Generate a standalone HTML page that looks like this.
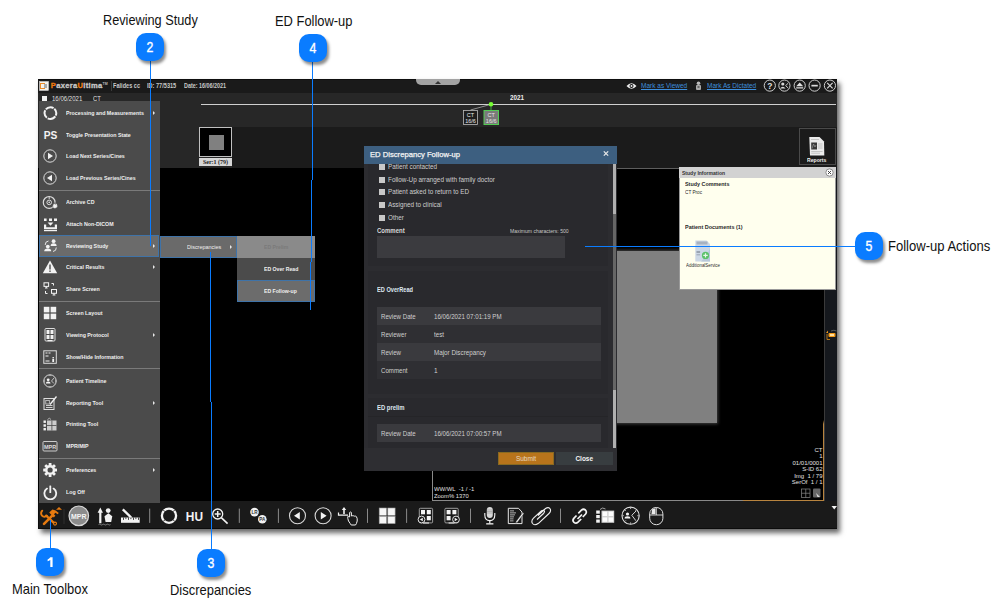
<!DOCTYPE html>
<html><head><meta charset="utf-8">
<style>
*{margin:0;padding:0;box-sizing:border-box}
html,body{width:1006px;height:614px;overflow:hidden;background:#fff;font-family:"Liberation Sans",sans-serif}
.a{position:absolute}
.lbl{position:absolute;font-size:15px;color:#111;white-space:nowrap;line-height:15px;transform:scaleX(.848);transform-origin:0 50%}
.badge{position:absolute;width:28px;height:28px;border-radius:10px;background:#0a7cff;box-shadow:2px 3px 3px rgba(0,0,0,.45);color:#fff;font-size:14.5px;line-height:28px;text-align:center}
.badge span{display:inline-block;transform:scaleX(.85);-webkit-text-stroke:.35px #fff}
.mi{position:absolute;left:66.2px;font-size:5.6px;font-weight:bold;color:#f0f0f0;white-space:nowrap;transform:scaleX(.945);transform-origin:0 50%;line-height:8px}
.arr{position:absolute;left:153px;width:0;height:0;border-left:2.2px solid #e8e8e8;border-top:2px solid transparent;border-bottom:2px solid transparent;margin-top:.5px}
.sep{position:absolute;left:39px;width:121px;height:1px;background:#7a7a7a}
.ico{position:absolute;left:42px}
.dt{position:absolute;font-size:6.5px;line-height:8px;color:#cfcfcf;white-space:nowrap;transform-origin:0 50%}
.t7{position:absolute;font-size:7px;white-space:nowrap;line-height:8px;transform-origin:0 50%}
</style></head><body>

<!-- ===== annotation labels ===== -->
<div class="lbl" style="left:103px;top:12.2px">Reviewing Study</div>
<div class="lbl" style="left:275px;top:13.3px;transform:scaleX(.86)">ED Follow-up</div>
<div class="lbl" style="left:12px;top:581.2px;transform:scaleX(.862)">Main Toolbox</div>
<div class="lbl" style="left:169.8px;top:581.7px;transform:scaleX(.863)">Discrepancies</div>
<div class="lbl" style="left:888px;top:238.3px;transform:scaleX(.869)">Follow-up Actions</div>

<!-- ===== app window ===== -->
<div class="a" id="win" style="left:38px;top:79px;width:799px;height:450px;background:#000;box-shadow:3px 4px 5px rgba(0,0,0,.6)"></div>
<!-- title bar -->
<div class="a" style="left:38px;top:79px;width:799px;height:13.5px;background:#1a1a1a;border-top:1px solid #0e0e0e"></div>
<!-- row2 + timeline -->
<div class="a" style="left:38px;top:92.5px;width:799px;height:34.5px;background:#272727"></div>
<!-- series strip -->
<div class="a" style="left:38px;top:127px;width:194px;height:41px;background:#272727"></div>
<div class="a" style="left:232px;top:127px;width:605px;height:41px;background:#1b1b1b"></div>
<!-- viewport -->
<div class="a" style="left:38px;top:168px;width:786px;height:333px;background:#000"></div>
<div class="a" style="left:824px;top:168px;width:13px;height:333px;background:#15181d;border-left:1px solid #3a3a3a"></div>
<!-- toolbar -->
<div class="a" style="left:38px;top:501px;width:799px;height:28px;background:#1a1a1a;border-left:1px solid #0c0c0c;border-bottom:1px solid #0c0c0c"></div>

<!-- title bar content -->
<svg class="a" style="left:39px;top:81px" width="10" height="10" viewBox="0 0 10 10">
  <rect x="0.5" y="0.5" width="9" height="9" fill="#f4f0ea" stroke="#ddd" stroke-width="0.5"/>
  <rect x="1.5" y="2.5" width="4" height="5" fill="none" stroke="#e88a2a" stroke-width="1"/>
  <rect x="5" y="3" width="3" height="4" fill="#aaa"/>
</svg>
<div class="a" style="left:50.8px;top:82.3px;font-size:7.6px;font-weight:bold;line-height:8px;white-space:nowrap;letter-spacing:.3px;color:#c8c8c8;-webkit-text-stroke:.3px currentColor"><span style="color:#ee7a10">P</span>axera<span style="color:#ee7a10">U</span>ltima<span style="font-size:3.5px;vertical-align:top;line-height:4px;letter-spacing:0;-webkit-text-stroke:0;color:#bbb">TM</span></div>
<div class="a" style="left:110.5px;top:81px;width:1px;height:10px;background:#3a3a3a"></div>
<div class="t7" style="left:113px;top:82px;font-size:6.5px;color:#c8c8c8;font-weight:bold;transform:scaleX(.86)">Falides cc</div>
<div class="t7" style="left:147px;top:82px;font-size:6.5px;color:#c8c8c8;font-weight:bold;transform:scaleX(.86)">ID: 77/5315</div>
<div class="t7" style="left:184px;top:82px;font-size:6.5px;color:#c8c8c8;font-weight:bold;transform:scaleX(.83)">Date: 16/06/2021</div>
<!-- grey top tab -->
<div class="a" style="left:416px;top:79px;width:44px;height:6px;background:#a3a3a3;border-radius:0 0 5px 5px"></div>
<div class="a" style="left:434.5px;top:80.5px;width:0;height:0;border-left:3px solid transparent;border-right:3px solid transparent;border-bottom:3px solid #333"></div>
<!-- right side title -->
<svg class="a" style="left:626px;top:82px" width="11" height="8" viewBox="0 0 11 8">
  <path d="M0.5 4 Q5.5 -1.5 10.5 4 Q5.5 9.5 0.5 4Z" fill="#f0f0f0"/>
  <circle cx="5.5" cy="4" r="2" fill="#121212"/><circle cx="5.5" cy="4" r="1" fill="#f0f0f0"/>
</svg>
<div class="t7" style="left:641px;top:82px;color:#3e8fdc;text-decoration:underline;transform:scaleX(.93);transform-origin:0 50%">Mark as Viewed</div>
<svg class="a" style="left:695px;top:81px" width="7" height="10" viewBox="0 0 7 10">
  <circle cx="3.5" cy="2.2" r="1.8" fill="#bbb"/><rect x="1" y="4" width="5" height="5" rx="1" fill="#aaa"/><rect x="2.5" y="5" width="2" height="2" fill="#666"/>
</svg>
<div class="t7" style="left:707px;top:82px;color:#3e8fdc;text-decoration:underline;transform:scaleX(.93);transform-origin:0 50%">Mark As Dictated</div>
<svg class="a" style="left:762px;top:79px" width="76" height="13" viewBox="0 0 76 13">
  <g fill="none" stroke="#d0d0d0" stroke-width="1">
    <circle cx="7.8" cy="6.6" r="5.6"/>
    <circle cx="22.4" cy="6.6" r="5.6"/>
    <circle cx="37.7" cy="6.6" r="5.6"/>
    <circle cx="52.6" cy="6.6" r="5.6"/>
    <circle cx="67.9" cy="6.6" r="5.6"/>
  </g>
  <text x="7.8" y="9.6" font-size="8.5" font-weight="bold" fill="#e0e0e0" text-anchor="middle" font-family="Liberation Sans">?</text>
  <g fill="#d8d8d8"><circle cx="20.8" cy="5" r="1.6"/><path d="M18 9.6 Q20.8 5.8 23.6 9.6Z"/></g><path d="M26.2 4.2 L23.6 6.6 L26.2 9" fill="none" stroke="#d8d8d8" stroke-width="0.9"/>
  <path d="M34.2 7.2 L37.7 3.6 L41.2 7.2Z M34.2 8.2 H41.2 V9.4 H34.2Z" fill="#e0e0e0"/>
  <rect x="49.4" y="5.8" width="6.4" height="1.7" fill="#d8d8d8"/>
  <path d="M65.2 3.9 L70.6 9.3 M70.6 3.9 L65.2 9.3" stroke="#d8d8d8" stroke-width="1.2"/>
</svg>
<!-- row 2 -->
<div class="a" style="left:42px;top:96.3px;width:4.7px;height:4.7px;background:#f0f0f0"></div>
<div class="t7" style="left:52px;top:94.8px;font-size:6.5px;color:#e0e0e0;transform:scaleX(.93)">16/06/2021</div>
<div class="t7" style="left:93px;top:94.8px;font-size:6.5px;color:#e0e0e0;transform:scaleX(.9)">CT</div>
<!-- timeline -->
<div class="a" style="left:201px;top:103.5px;width:635px;height:1.5px;background:#cfcfcf"></div>
<div class="t7" style="left:510px;top:94px;color:#eee;font-weight:bold;transform:scaleX(.9);transform-origin:0 50%">2021</div>
<svg class="a" style="left:460px;top:100px" width="45" height="28" viewBox="0 0 45 28">
  <line x1="31" y1="4.3" x2="10.5" y2="10" stroke="#bbb" stroke-width="0.7"/>
  <line x1="31" y1="4.3" x2="31" y2="10" stroke="#4c4" stroke-width="0.8"/>
  <rect x="3.5" y="10.5" width="14" height="14" fill="#1e1e1e" stroke="#bbb" stroke-width="0.8"/>
  <rect x="24" y="10.5" width="14.5" height="14" fill="#7a7a7a" stroke="#5c5" stroke-width="1"/>
  <circle cx="31" cy="4.3" r="2.3" fill="#7f3"/>
  <g font-family="Liberation Sans" font-size="5.5" fill="#e8e8e8" text-anchor="middle">
    <text x="10.5" y="16.5">CT</text><text x="10.5" y="22.5">16/6</text>
    <text x="31.2" y="16.5">CT</text><text x="31.2" y="22.5">16/6</text>
  </g>
</svg>
<!-- series thumbnail -->
<div class="a" style="left:199px;top:127px;width:33px;height:30px;background:#000;border:1px solid #c0c0c0"></div>
<div class="a" style="left:208.5px;top:135px;width:15.5px;height:15px;background:#808080"></div>
<div class="a" style="left:199px;top:157.5px;width:33px;height:8px;background:#d6d6d6;font-family:'Liberation Serif',serif;font-size:6px;line-height:8px;color:#222;text-align:center;font-weight:bold">Ser:1 (79)</div>
<!-- reports -->
<div class="a" style="left:799px;top:128px;width:37px;height:37px;border:1px solid #4a4a4a;background:#1b1b1b"></div>
<svg class="a" style="left:808px;top:136px" width="18" height="21" viewBox="0 0 18 21">
  <path d="M1.3 1 H11.5 L16 5.5 L16.3 19.5 H2 Z" fill="#ececec"/>
  <rect x="3.2" y="6.5" width="5.8" height="7" fill="#3a3a3a"/>
  <path d="M4 12.5 L5.5 8 L7 11 L8 9" fill="none" stroke="#aaa" stroke-width="0.6"/>
  <g stroke="#aaa" stroke-width="0.6"><line x1="3" y1="3.5" x2="11" y2="3.5"/><line x1="10" y1="8" x2="14.5" y2="8"/><line x1="10" y1="10" x2="14.5" y2="10"/><line x1="10" y1="12" x2="14.5" y2="12"/><line x1="3.2" y1="15.5" x2="14.5" y2="15.5"/><line x1="3.2" y1="17.2" x2="12" y2="17.2"/></g>
</svg>
<div class="a" style="left:807.2px;top:157px;font-size:6px;font-weight:bold;color:#f0f0f0;line-height:7px;transform:scaleX(.85);transform-origin:0 50%">Reports</div>

<!--MENU-->
<div class="a" style="left:39px;top:101px;width:121px;height:402px;background:#4b4b4b"></div>
<div class="sep" style="top:189.5px"></div>
<div class="sep" style="top:300.5px"></div>
<div class="sep" style="top:368.0px"></div>
<div class="sep" style="top:458.0px"></div>
<div class="a" style="left:39px;top:235px;width:120px;height:22px;background:#6b6b6b;border:1px solid #3f73a8"></div>
<div class="mi" style="top:109px">Processing and Measurements</div>
<div class="arr" style="top:110.5px"></div>
<svg class="ico" style="top:105px" width="16" height="16" viewBox="0 0 16 16"><circle cx="8.4" cy="8.1" r="5.9" fill="none" stroke="#f2f2f2" stroke-width="2" stroke-dasharray="8.37 0.9" stroke-dashoffset="-3.5"/></svg>
<div class="mi" style="top:131px">Toggle Presentation State</div>
<svg class="ico" style="top:127px" width="16" height="16" viewBox="0 0 16 16"><text x="1.8" y="12.4" font-family="Liberation Sans" font-weight="bold" font-size="10.4" fill="#f2f2f2" textLength="13.6" lengthAdjust="spacingAndGlyphs">PS</text></svg>
<div class="mi" style="top:152px">Load Next Series/Cines</div>
<svg class="ico" style="top:148px" width="16" height="16" viewBox="0 0 16 16"><circle cx="8" cy="8" r="6.2" fill="none" stroke="#ddd" stroke-width="1"/><path d="M6 4.8 L11 8 L6 11.2Z" fill="#f2f2f2"/></svg>
<div class="mi" style="top:174px">Load Previous Series/Cines</div>
<svg class="ico" style="top:170px" width="16" height="16" viewBox="0 0 16 16"><circle cx="8" cy="8" r="6.2" fill="none" stroke="#ddd" stroke-width="1"/><path d="M10 4.8 L5 8 L10 11.2Z" fill="#f2f2f2"/></svg>
<div class="mi" style="top:198px">Archive CD</div>
<svg class="ico" style="top:194px" width="16" height="16" viewBox="0 0 16 16"><circle cx="7.2" cy="8.4" r="5.9" fill="none" stroke="#ddd" stroke-width="1.2"/><circle cx="7.2" cy="8.4" r="2.3" fill="none" stroke="#ddd" stroke-width="1"/><circle cx="7.2" cy="8.4" r="0.8" fill="#ddd"/><line x1="7.2" y1="2.5" x2="7.2" y2="5" stroke="#ddd" stroke-width="1"/><path d="M10.8 13.6 Q10 10.8 12.4 9 Q12.6 10.6 13.6 10.2 Q13.4 9.2 13.2 8.4 Q16.2 10.4 15.4 13 Q14.6 14.4 12.8 14.4 Q11.4 14.4 10.8 13.6Z" fill="#f2f2f2" stroke="#4b4b4b" stroke-width="0.5"/></svg>
<div class="mi" style="top:220px">Attach Non-DICOM</div>
<svg class="ico" style="top:216px" width="16" height="16" viewBox="0 0 16 16"><g fill="#f2f2f2"><rect x="2" y="2.5" width="2.6" height="2.5"/><rect x="7" y="2.5" width="3" height="2.5"/><rect x="12" y="2.5" width="3" height="2.5"/><path d="M2 8.6 H4.2 V11.2 H12.8 V8.6 H15 V13.2 H2Z"/><rect x="2" y="14" width="13" height="1.2"/><path d="M5.6 6.4 H11.4 L8.5 9.8Z"/></g></svg>
<div class="mi" style="top:242px">Reviewing Study</div>
<div class="arr" style="top:243.5px"></div>
<svg class="ico" style="top:238px" width="16" height="16" viewBox="0 0 16 16"><g fill="#f2f2f2"><circle cx="11.6" cy="3.2" r="1.9"/><path d="M8.6 8 Q8.6 5.2 11.6 5.2 Q14.6 5.2 14.6 8Z"/><circle cx="5.8" cy="8.6" r="1.9"/><path d="M2.2 13.2 Q2.2 10.6 5.8 10.6 Q9.2 10.6 9.2 13.2Z"/></g><g fill="none" stroke="#f2f2f2" stroke-width="0.9"><path d="M3.2 7 Q3 3.5 6.5 3"/><path d="M14.3 9.5 Q14.5 13 11 13.5"/></g></svg>
<div class="mi" style="top:263px">Critical Results</div>
<div class="arr" style="top:264.5px"></div>
<svg class="ico" style="top:259px" width="16" height="16" viewBox="0 0 16 16"><path d="M8 1.5 L15.2 14.2 H0.8Z" fill="#f2f2f2"/><rect x="7.3" y="5.5" width="1.4" height="5" fill="#4b4b4b"/><rect x="7.3" y="11.5" width="1.4" height="1.4" fill="#4b4b4b"/></svg>
<div class="mi" style="top:285px">Share Screen</div>
<svg class="ico" style="top:281px" width="16" height="16" viewBox="0 0 16 16"><g fill="none" stroke="#f2f2f2" stroke-width="1"><rect x="2" y="1.8" width="4.6" height="3.6"/><line x1="4.3" y1="5.4" x2="4.3" y2="7"/><line x1="3" y1="7" x2="5.6" y2="7"/><rect x="9.5" y="8.5" width="5" height="3.8"/><line x1="12" y1="12.3" x2="12" y2="14"/><line x1="10.6" y1="14" x2="13.4" y2="14"/><path d="M9.5 2.5 H11.5 V4.5"/><path d="M3.5 10 V12.5 H5.5"/></g></svg>
<div class="mi" style="top:309px">Screen Layout</div>
<svg class="ico" style="top:305px" width="16" height="16" viewBox="0 0 16 16"><g fill="#f2f2f2"><rect x="1.8" y="1.8" width="5.6" height="5.6"/><rect x="8.6" y="1.8" width="5.6" height="5.6"/><rect x="1.8" y="8.6" width="5.6" height="5.6"/><rect x="8.6" y="8.6" width="5.6" height="5.6"/></g></svg>
<div class="mi" style="top:331px">Viewing Protocol</div>
<div class="arr" style="top:332.5px"></div>
<svg class="ico" style="top:327px" width="16" height="16" viewBox="0 0 16 16"><rect x="3" y="1.5" width="10" height="12.5" rx="1" fill="none" stroke="#ddd" stroke-width="1"/><g fill="#f2f2f2"><rect x="4.5" y="3" width="3" height="4"/><rect x="8.5" y="3" width="3" height="4"/><rect x="4.5" y="8" width="3" height="4"/><rect x="8.5" y="8" width="3" height="4"/><rect x="5.5" y="13" width="5" height="1.2"/></g></svg>
<div class="mi" style="top:352.5px">Show/Hide Information</div>
<svg class="ico" style="top:348.5px" width="16" height="16" viewBox="0 0 16 16"><rect x="1.8" y="1.8" width="12.5" height="12.5" fill="none" stroke="#ddd" stroke-width="1"/><g fill="#f2f2f2"><rect x="3.5" y="3.5" width="2" height="1"/><rect x="6.5" y="3.5" width="2" height="1"/><rect x="3.5" y="6.5" width="3" height="1"/><rect x="3.5" y="11.5" width="4" height="1"/><rect x="10.5" y="8" width="1.4" height="1.4"/><rect x="10.3" y="10" width="1.8" height="3"/></g></svg>
<div class="mi" style="top:376.5px">Patient Timeline</div>
<svg class="ico" style="top:372.5px" width="16" height="16" viewBox="0 0 16 16"><circle cx="8" cy="8" r="6.2" fill="none" stroke="#ddd" stroke-width="1"/><g stroke="#ddd" stroke-width="0.8"><line x1="8" y1="1.8" x2="8" y2="3"/><line x1="14.2" y1="8" x2="13" y2="8"/><line x1="8" y1="14.2" x2="8" y2="13"/><line x1="1.8" y1="8" x2="3" y2="8"/><path d="M12 5 L9.5 8 L12 10.5" fill="none"/></g><g fill="#f2f2f2"><circle cx="6.2" cy="6.8" r="1.4"/><path d="M3.8 10.5 Q3.8 8.5 6.2 8.5 Q8.6 8.5 8.6 10.5Z"/></g></svg>
<div class="mi" style="top:398.5px">Reporting Tool</div>
<div class="arr" style="top:400.0px"></div>
<svg class="ico" style="top:394.5px" width="16" height="16" viewBox="0 0 16 16"><rect x="2" y="3.5" width="10" height="11" fill="none" stroke="#ddd" stroke-width="1"/><g fill="#ddd"><rect x="3.8" y="5.5" width="3.5" height="3.5" fill="none" stroke="#ddd" stroke-width="0.7"/><rect x="4" y="10" width="6.5" height="0.9"/><rect x="4" y="12" width="6.5" height="0.9"/></g><path d="M8 9.5 L14.5 1.5" stroke="#f2f2f2" stroke-width="1.3"/></svg>
<div class="mi" style="top:420px">Printing Tool</div>
<svg class="ico" style="top:416px" width="16" height="16" viewBox="0 0 16 16"><g fill="#f2f2f2"><rect x="1.5" y="4.5" width="2.4" height="2.4"/><rect x="1.5" y="8.3" width="2.4" height="2.4"/><rect x="1.5" y="12" width="2.4" height="2.4"/></g><rect x="5" y="4.5" width="9.5" height="10" fill="#ccc"/><g fill="#4b4b4b"><rect x="9.5" y="4.5" width="0.8" height="10"/><rect x="5" y="9.2" width="9.5" height="0.8"/></g><path d="M5.5 3.5 Q7.5 1 9 3.5" fill="none" stroke="#ccc" stroke-width="0.8"/></svg>
<div class="mi" style="top:442px">MPR/MIP</div>
<svg class="ico" style="top:438px" width="16" height="16" viewBox="0 0 16 16"><rect x="1" y="3.5" width="14" height="9.5" rx="1" fill="none" stroke="#ccc" stroke-width="1"/><text x="8" y="10.6" font-family="Liberation Sans" font-weight="bold" font-size="5.5" fill="#ddd" text-anchor="middle">MPR</text></svg>
<div class="mi" style="top:466px">Preferences</div>
<div class="arr" style="top:467.5px"></div>
<svg class="ico" style="top:462px" width="16" height="16" viewBox="0 0 16 16"><g transform="translate(8.1 8)" fill="#f2f2f2"><circle r="5.1"/><rect x="-1.4" y="-6.9" width="2.8" height="2.6" rx="0.5" transform="rotate(0)"/><rect x="-1.4" y="-6.9" width="2.8" height="2.6" rx="0.5" transform="rotate(45)"/><rect x="-1.4" y="-6.9" width="2.8" height="2.6" rx="0.5" transform="rotate(90)"/><rect x="-1.4" y="-6.9" width="2.8" height="2.6" rx="0.5" transform="rotate(135)"/><rect x="-1.4" y="-6.9" width="2.8" height="2.6" rx="0.5" transform="rotate(180)"/><rect x="-1.4" y="-6.9" width="2.8" height="2.6" rx="0.5" transform="rotate(225)"/><rect x="-1.4" y="-6.9" width="2.8" height="2.6" rx="0.5" transform="rotate(270)"/><rect x="-1.4" y="-6.9" width="2.8" height="2.6" rx="0.5" transform="rotate(315)"/><circle r="2.6" fill="#4b4b4b"/></g></svg>
<div class="mi" style="top:487.5px">Log Off</div>
<svg class="ico" style="top:483.5px" width="16" height="16" viewBox="0 0 16 16"><path d="M5 4.6 A5.9 5.9 0 1 0 11.6 4.6" fill="none" stroke="#f2f2f2" stroke-width="1.8" stroke-linecap="round"/><rect x="7.4" y="1.6" width="1.8" height="7.4" rx="0.5" fill="#f2f2f2"/></svg>
<div class="a" style="left:160px;top:235.5px;width:77px;height:22.5px;background:#6a6a6a;border:1px solid #3f73a8"></div>
<div class="mi" style="left:187px;top:242.5px;font-size:6px;font-weight:normal;transform:scaleX(.91)">Discrepancies</div>
<div class="arr" style="left:229.5px;top:244px"></div>
<div class="a" style="left:237px;top:236px;width:78px;height:22px;background:#8a8a8a"></div>
<div class="a" style="left:237px;top:258px;width:78px;height:22px;background:#4b4b4b"></div>
<div class="a" style="left:237px;top:280px;width:78px;height:22px;background:#6c6c6c;border:1px solid #3f73a8"></div>
<div class="mi" style="left:264px;top:243px;color:#7a7a7a;transform:scaleX(.92)">ED Prelim</div>
<div class="mi" style="left:264px;top:265px;transform:scaleX(.92)">ED Over Read</div>
<div class="mi" style="left:264px;top:287px;transform:scaleX(.92)">ED Follow-up</div>
<!--/MENU-->
<!--VIEW-->
<!-- ===== viewport overlays ===== -->
<div class="a" style="left:596px;top:251px;width:121px;height:171.5px;background:#808080;box-shadow:0 0 3px 1px rgba(128,128,128,.5)"></div>
<!-- viewport borders -->
<div class="a" style="left:432px;top:168px;width:1px;height:333px;background:#8a8a8a"></div>
<div class="a" style="left:432px;top:168px;width:392px;height:1px;background:#5e5e5e"></div>
<div class="a" style="left:432px;top:500px;width:392px;height:1px;background:linear-gradient(90deg,#8a8a8a 0,#8a8a8a 310px,#b8843f 312px)"></div>
<div class="a" style="left:823px;top:420px;width:1px;height:81px;background:linear-gradient(180deg,rgba(201,138,58,0),#b8843f 4px)"></div>
<div class="t7" style="left:434px;top:486.3px;font-size:6px;line-height:7px;color:#e0e0e0;transform:scaleX(.98)">WW/WL&nbsp;&nbsp;-1 / -1</div>
<div class="t7" style="left:434px;top:493.3px;font-size:6px;line-height:7px;color:#e0e0e0;transform:scaleX(.97)">Zoom% 1370</div>
<div class="a" style="left:760.5px;top:446.5px;width:62px;font-size:6px;line-height:6.6px;color:#e0e0e0;text-align:right;white-space:nowrap">CT<br>1<br>01/01/0001<br>S-ID 62<br>Img&nbsp;&nbsp;1 / 79<br>SerOf&nbsp;&nbsp;1 / 1</div>
<svg class="a" style="left:800px;top:488px" width="23" height="11" viewBox="0 0 23 11">
  <rect x="1.5" y="1" width="8.5" height="8.5" fill="none" stroke="#888" stroke-width="0.7"/>
  <line x1="5.75" y1="1" x2="5.75" y2="9.5" stroke="#888" stroke-width="0.7"/><line x1="1.5" y1="5.25" x2="10" y2="5.25" stroke="#888" stroke-width="0.7"/>
  <rect x="13" y="0.5" width="7.5" height="9" rx="1" fill="#666"/>
  <path d="M16 5 L20 9 L17.5 9Z" fill="#ddd"/>
</svg>
<!-- right strip orange icon -->
<svg class="a" style="left:825px;top:328px" width="12" height="13" viewBox="0 0 12 13">
  <path d="M1 5 L3 2.5 L3 5Z" fill="#f29a1a"/>
  <path d="M2 6 V11.5 H5" fill="none" stroke="#d88a1a" stroke-width="0.8"/>
  <rect x="3.5" y="5" width="7" height="4" rx="1" fill="#f29a1a"/>
  <rect x="5" y="6" width="4" height="2" fill="#ffe0a0"/>
  <path d="M6 3 Q9 1.5 11.5 3" fill="none" stroke="#777" stroke-width="0.7"/>
</svg>
<!-- ===== study info panel ===== -->
<div class="a" style="left:679px;top:167px;width:156.5px;height:123px;background:#ffffee;border:0.5px solid #999"></div>
<div class="a" style="left:679px;top:167px;width:156.5px;height:10.5px;background:#d2d2d2"></div>
<div class="t7" style="left:682px;top:169.6px;font-size:5.6px;line-height:7px;font-weight:bold;color:#333;transform:scaleX(.9)">Study Information</div>
<svg class="a" style="left:825px;top:168px" width="9" height="9" viewBox="0 0 9 9"><circle cx="4.5" cy="4.5" r="3.6" fill="#fff" stroke="#666" stroke-width="0.7"/><path d="M3 3 L6 6 M6 3 L3 6" stroke="#333" stroke-width="0.9"/></svg>
<div class="t7" style="left:685px;top:180.5px;font-size:6px;line-height:7px;font-weight:bold;color:#2a2a2a;transform:scaleX(.9)">Study Comments</div>
<div class="t7" style="left:685px;top:188.5px;font-size:5.5px;line-height:7px;color:#2a2a2a;transform:scaleX(.85)">CT Proc</div>
<div class="t7" style="left:685px;top:224px;font-size:6px;line-height:7px;font-weight:bold;color:#2a2a2a;transform:scaleX(.91)">Patient Documents (1)</div>
<svg class="a" style="left:694px;top:239.5px" width="18" height="22" viewBox="0 0 18 22">
  <path d="M1.3 0.5 H12.5 L16 4 V21.5 H1.3Z" fill="#ccd8e6"/>
  <rect x="2.5" y="1.5" width="11" height="3" fill="#a8b2c0"/>
  <path d="M7 21.5 Q13 17 16 8 V21.5Z" fill="#b8c8da"/>
  <g fill="#9aa4b2"><rect x="2.5" y="11" width="3.6" height="2"/><rect x="2.5" y="14.3" width="3.6" height="1"/></g>
  <circle cx="11.5" cy="15.4" r="3.6" fill="#5cc26a"/>
  <path d="M11.5 13.2 V17.6 M9.3 15.4 H13.7" stroke="#e8f8e8" stroke-width="1.2"/>
</svg>
<div class="t7" style="left:685.5px;top:261.5px;font-size:5.5px;line-height:7px;color:#2a2a2a;transform:scaleX(.8)">AdditionalService</div>

<!--/VIEW-->
<!--DIALOG-->
<!-- ===== dialog ===== -->
<div class="a" style="left:364px;top:146px;width:252.5px;height:325px;background:#2c2c30"></div>
<div class="a" style="left:364px;top:146px;width:252.5px;height:18px;background:#3d5f80"></div>
<div class="a" style="left:370px;top:149.5px;font-size:8px;line-height:9px;color:#f4f4f4;white-space:nowrap;transform:scaleX(.955);transform-origin:0 50%;-webkit-text-stroke:.25px #f4f4f4">ED Discrepancy Follow-up</div>
<svg class="a" style="left:602.5px;top:150.8px" width="6" height="5" viewBox="0 0 6 5"><path d="M0.8 0.4 L5.2 4.6 M5.2 0.4 L0.8 4.6" stroke="#e8e8e8" stroke-width="1.2"/></svg>
<!-- panel 1 -->
<div class="a" style="left:367.5px;top:164px;width:240px;height:101.5px;background:#29292d"></div>
<!-- checkboxes -->
<div class="a" style="left:379px;top:163.5px;width:6px;height:6px;background:#c8c8c8"></div>
<div class="a" style="left:379px;top:176.5px;width:6px;height:6px;background:#c8c8c8"></div>
<div class="a" style="left:379px;top:189px;width:6px;height:6px;background:#c8c8c8"></div>
<div class="a" style="left:379px;top:201.5px;width:6px;height:6px;background:#c8c8c8"></div>
<div class="a" style="left:379px;top:214.5px;width:6px;height:6px;background:#c8c8c8"></div>
<div class="dt" style="left:387.5px;top:162.5px;transform:scaleX(.976)">Patient contacted</div>
<div class="dt" style="left:387.5px;top:175.5px;transform:scaleX(.98)">Follow-Up arranged with family doctor</div>
<div class="dt" style="left:387.5px;top:188px;transform:scaleX(.97)">Patient asked to return to ED</div>
<div class="dt" style="left:387.5px;top:200.5px;transform:scaleX(.97)">Assigned to clinical</div>
<div class="dt" style="left:387.5px;top:213.5px;transform:scaleX(.97)">Other</div>
<div class="dt" style="left:377px;top:226.5px;font-weight:bold;color:#d8d8d8;transform:scaleX(.924)">Comment</div>
<div class="dt" style="left:510px;top:227px;font-size:5px;color:#c8c8c8;transform:scaleX(1.02)">Maximum characters: 500</div>
<div class="a" style="left:377px;top:236px;width:187.5px;height:22px;background:#3b3b3f"></div>
<!-- panel 2 ED OverRead -->
<div class="a" style="left:367.5px;top:271px;width:240px;height:122.5px;background:#29292d"></div>
<div class="dt" style="left:377px;top:286px;font-weight:bold;color:#dde6f0;transform:scaleX(.867)">ED OverRead</div>
<div class="a" style="left:376.5px;top:307px;width:224.5px;height:18px;background:#3a3a3e"></div>
<div class="a" style="left:376.5px;top:325px;width:224.5px;height:18px;background:#2f2f33"></div>
<div class="a" style="left:376.5px;top:343px;width:224.5px;height:18px;background:#3a3a3e"></div>
<div class="a" style="left:376.5px;top:361px;width:224.5px;height:18px;background:#2f2f33"></div>
<div class="dt" style="left:381px;top:313px;transform:scaleX(.94)">Review Date</div>
<div class="dt" style="left:434px;top:313px;transform:scaleX(.95)">16/06/2021 07:01:19 PM</div>
<div class="dt" style="left:381px;top:331px;transform:scaleX(.94)">Reviewer</div>
<div class="dt" style="left:434px;top:331px;transform:scaleX(.95)">test</div>
<div class="dt" style="left:381px;top:349px;transform:scaleX(.94)">Review</div>
<div class="dt" style="left:434px;top:349px;transform:scaleX(.966)">Major Discrepancy</div>
<div class="dt" style="left:381px;top:367px;transform:scaleX(.94)">Comment</div>
<div class="dt" style="left:434px;top:367px">1</div>
<!-- panel 3 ED prelim -->
<div class="a" style="left:367.5px;top:398px;width:240px;height:50px;background:#29292d"></div>
<div class="a" style="left:367.5px;top:416px;width:240px;height:1px;background:#252528"></div>
<div class="dt" style="left:377px;top:403.5px;font-weight:bold;color:#dde6f0;transform:scaleX(.906)">ED prelim</div>
<div class="a" style="left:376.5px;top:424px;width:224.5px;height:18px;background:#3a3a3e"></div>
<div class="dt" style="left:381px;top:430px;transform:scaleX(.94)">Review Date</div>
<div class="dt" style="left:434px;top:430px;transform:scaleX(.95)">16/06/2021 07:00:57 PM</div>
<!-- footer -->
<div class="a" style="left:364px;top:448px;width:252.5px;height:23px;background:#2e2e32"></div>
<div class="a" style="left:498px;top:451.5px;width:56px;height:13.5px;background:#b8741b;border:0.5px solid #8a6a20"></div>
<div class="a" style="left:498px;top:454.5px;width:56px;text-align:center;font-size:6.5px;line-height:8px;color:#e8d8c0">Submit</div>
<div class="a" style="left:556px;top:451.5px;width:56.5px;height:13.5px;background:#383d40"></div>
<div class="a" style="left:556px;top:454.5px;width:56.5px;text-align:center;font-size:6.5px;line-height:8px;font-weight:bold;color:#f4f4f4">Close</div>
<!-- scrollbar -->
<div class="a" style="left:613px;top:164px;width:3px;height:284px;background:#666"></div>
<div class="a" style="left:613px;top:164px;width:3px;height:50px;background:#b0b0b0"></div>
<div class="a" style="left:613px;top:390px;width:3px;height:58px;background:#b0b0b0"></div>

<!--/DIALOG-->
<!--TOOLBAR-->
<!-- ===== toolbar icons ===== -->
<svg class="a" style="left:38px;top:501px" width="799" height="27" viewBox="38 501 799 27">
  <!-- tools -->
  <g fill="none" stroke="#e67a10" stroke-linecap="round">
    <line x1="44" y1="523.8" x2="52.5" y2="515.3" stroke-width="2.6"/>
    <line x1="46.2" y1="515.6" x2="53.6" y2="522.6" stroke-width="2.2"/>
    <path d="M42.2 510.8 A3 3 0 0 0 46.8 515.8" stroke-width="2"/>
    <circle cx="55" cy="523.6" r="1.5" stroke-width="1.1"/>
  </g>
  <path d="M49.2 512.6 L52.4 509.4 Q55.5 509.3 58.8 513 L57.6 514.2 L55.4 512.8 L54 514.2 L55.4 515.8 L53.8 517.4 Z" fill="#e67a10"/>
  <path d="M56 509.8 L59 507 L62 509.8Z" fill="#e67a10"/>
  <rect x="63.5" y="509" width="1" height="15" fill="#2e2e2e"/>
  <!-- MPR -->
  <circle cx="78.8" cy="515.8" r="9.8" fill="#8c8c8c" stroke="#d8d8d8" stroke-width="1.2"/>
  <text x="78.8" y="518.6" font-family="Liberation Sans" font-weight="bold" font-size="7.6" fill="#f4f4f4" text-anchor="middle" textLength="15.5" lengthAdjust="spacingAndGlyphs">MPR</text>
  <!-- person arrow -->
  <g fill="#f2f2f2">
    <path d="M97.6 512.8 L100.3 507.6 L103 512.8 L101.4 512.8 L101.4 523.2 L99.2 523.2 L99.2 512.8Z"/>
    <circle cx="108.2" cy="510.6" r="2.4"/>
    <path d="M104.5 516.3 L108.4 513.3 L112.3 516.3 L111.2 522 L105.6 522Z"/>
  </g>
  <path d="M98.5 524.6 q1 -0.8 2 0 t2 0 t2 0 t2 0 t2 0 t2 0" fill="none" stroke="#bbb" stroke-width="0.6"/>
  <!-- ruler -->
  <path d="M122 510.2 L123.6 508.6 L131.8 516.6 L131.6 518.2 L130 518Z" fill="#f2f2f2"/>
  <rect x="121" y="517.5" width="18.7" height="5.3" fill="#f2f2f2"/>
  <g fill="#1a1a1a"><rect x="123" y="517.5" width="0.8" height="2.4"/><rect x="125.5" y="517.5" width="0.8" height="1.6"/><rect x="128" y="517.5" width="0.8" height="2.4"/><rect x="130.5" y="517.5" width="0.8" height="1.6"/><rect x="133" y="517.5" width="0.8" height="2.4"/><rect x="135.5" y="517.5" width="0.8" height="1.6"/><rect x="138" y="517.5" width="0.8" height="2.4"/></g>
  <rect x="149.2" y="508.6" width="1" height="14.3" fill="#8a8a8a"/>
  <!-- ring -->
  <circle cx="169" cy="515.7" r="7.1" fill="none" stroke="#f4f4f4" stroke-width="2.3"/>
  <g stroke="#1a1a1a" stroke-width="0.9"><line x1="163" y1="509.7" x2="165" y2="511.7"/><line x1="175" y1="509.7" x2="173" y2="511.7"/><line x1="163" y1="521.7" x2="165" y2="519.7"/><line x1="175" y1="521.7" x2="173" y2="519.7"/></g>
  <!-- HU -->
  <text x="185.8" y="520.6" font-family="Liberation Sans" font-weight="bold" font-size="12.8" fill="#f2f2f2" textLength="17.2" lengthAdjust="spacingAndGlyphs">HU</text>
  <!-- zoom -->
  <circle cx="217.7" cy="514" r="5" fill="none" stroke="#f2f2f2" stroke-width="1.3"/>
  <line x1="221.3" y1="517.6" x2="227.6" y2="523.6" stroke="#f2f2f2" stroke-width="1.6"/>
  <path d="M217.7 511 V517 M214.7 514 H220.7" stroke="#f2f2f2" stroke-width="1.5"/>
  <rect x="238.8" y="508.6" width="1" height="14.3" fill="#8a8a8a"/>
  <!-- LR PA -->
  <circle cx="254.5" cy="512.1" r="4.3" fill="#f2f2f2"/>
  <circle cx="262.3" cy="519.3" r="4.3" fill="#f2f2f2"/>
  <text x="254.5" y="513.6" font-family="Liberation Sans" font-weight="bold" font-size="4.6" fill="#333" text-anchor="middle">LR</text>
  <text x="262.3" y="520.8" font-family="Liberation Sans" font-weight="bold" font-size="4.6" fill="#333" text-anchor="middle">PA</text>
  <rect x="277.9" y="508.6" width="1" height="14.3" fill="#8a8a8a"/>
  <!-- prev/next -->
  <circle cx="297.5" cy="515.7" r="8" fill="none" stroke="#d8d8d8" stroke-width="1.1"/>
  <path d="M294 515.7 L299.8 512 L299.8 519.4Z" fill="#f4f4f4"/>
  <circle cx="323.1" cy="515.7" r="8" fill="none" stroke="#d8d8d8" stroke-width="1.1"/>
  <path d="M326.6 515.7 L320.8 512 L320.8 519.4Z" fill="#f4f4f4"/>
  <!-- upload hand -->
  <path d="M344 507 L346.2 510 L344.8 510 L344.8 514 L343.2 514 L343.2 510 L341.8 510Z" fill="#f2f2f2"/>
  <path d="M338.5 512.5 V515.2 H348" fill="none" stroke="#f2f2f2" stroke-width="1.2"/>
  <path d="M350.2 523.5 Q348 521 347.8 518.5 L347.8 516.5 Q348.8 516 349.6 517 L349.6 512.5 Q350.4 511.5 351.4 512.5 L351.4 516 Q352.2 515.2 353 516 Q353.8 515.4 354.6 516.2 Q355.4 515.8 356.4 516.6 Q357.6 518.5 357.2 521 Q356.6 523.8 355.5 525 L351.2 525Z" fill="#1a1a1a" stroke="#f2f2f2" stroke-width="1"/>
  <rect x="367" y="508.6" width="1" height="14.3" fill="#8a8a8a"/>
  <!-- grid -->
  <g fill="#f6f6f6" stroke="#9a9a9a" stroke-width="0.6"><rect x="379.2" y="508" width="7.3" height="7.3"/><rect x="387.8" y="508" width="7.3" height="7.3"/><rect x="379.2" y="516.3" width="7.3" height="7.3"/><rect x="387.8" y="516.3" width="7.3" height="7.3"/></g>
  <rect x="406.1" y="508.6" width="1" height="14.3" fill="#8a8a8a"/>
  <!-- grid left -->
  <rect x="419.3" y="508.3" width="13.3" height="14.6" rx="1" fill="none" stroke="#aaa" stroke-width="0.9"/>
  <g fill="#f4f4f4"><rect x="421" y="510" width="4" height="4.3"/><rect x="426.8" y="510" width="4" height="4.3"/><rect x="426.8" y="516" width="4" height="4.3"/><rect x="423" y="522.5" width="6" height="1"/></g>
  <circle cx="421.5" cy="519.5" r="3.4" fill="#1a1a1a" stroke="#f4f4f4" stroke-width="0.9"/>
  <path d="M419.8 519.5 L422.8 517.8 L422.8 521.2Z" fill="#f4f4f4"/>
  <!-- grid right -->
  <rect x="444.9" y="508.3" width="13.3" height="14.6" rx="1" fill="none" stroke="#aaa" stroke-width="0.9"/>
  <g fill="#f4f4f4"><rect x="446.6" y="510" width="4" height="4.3"/><rect x="452.4" y="510" width="4" height="4.3"/><rect x="446.6" y="516" width="4" height="4.3"/><rect x="448.6" y="522.5" width="6" height="1"/></g>
  <circle cx="456" cy="519.5" r="3.4" fill="#1a1a1a" stroke="#f4f4f4" stroke-width="0.9"/>
  <path d="M457.7 519.5 L454.7 517.8 L454.7 521.2Z" fill="#f4f4f4"/>
  <rect x="470" y="508.6" width="1" height="14.3" fill="#8a8a8a"/>
  <!-- mic -->
  <rect x="486.8" y="507" width="6" height="11" rx="3" fill="#d8d8d8"/>
  <g stroke="#888" stroke-width="0.5"><line x1="487" y1="510" x2="492.6" y2="510"/><line x1="487" y1="511.5" x2="492.6" y2="511.5"/><line x1="487" y1="513" x2="492.6" y2="513"/></g>
  <path d="M484.8 513 V515 Q484.8 520.6 489.8 520.6 Q494.8 520.6 494.8 515 V513" fill="none" stroke="#f2f2f2" stroke-width="1.1"/>
  <rect x="489.2" y="520.5" width="1.2" height="3" fill="#f2f2f2"/>
  <rect x="486.2" y="523.2" width="7.2" height="1.3" fill="#f2f2f2"/>
  <!-- report -->
  <path d="M508.3 508.3 H518.5 L522 512 V523.6 H508.3Z" fill="none" stroke="#e8e8e8" stroke-width="1"/>
  <g fill="#d8d8d8"><rect x="510" y="510.5" width="4" height="0.8"/><rect x="510" y="512.5" width="6" height="0.8"/><rect x="510" y="514.5" width="5" height="0.8"/><rect x="510" y="516.5" width="4" height="0.8"/><rect x="510" y="518.5" width="3.5" height="0.8"/><rect x="510" y="520.5" width="3.5" height="0.8"/></g>
  <path d="M516 521.5 L522.8 512.5 L524 513.5 L517.3 522.5 L515.6 523Z" fill="#f2f2f2" stroke="#1a1a1a" stroke-width="0.4"/>
  <!-- paperclip -->
  <path d="M538 515.5 L545.5 508.5 Q548.6 506.5 550.2 509 Q551.3 511.3 549 513.5 L538.5 523.3 Q534.5 526 532.5 523.5 Q530.8 521 533.5 518.2 L541.5 510.8 Q543.3 509.6 544.3 510.8 Q545 512 543.5 513.5 L537 519.5" fill="none" stroke="#f0f0f0" stroke-width="1.1"/>
  <rect x="560" y="508.6" width="1" height="14.3" fill="#8a8a8a"/>
  <!-- link -->
  <g fill="none" stroke="#f4f4f4" stroke-width="1.7"><path d="M576.5 515.5 L573.8 518.4 Q572 520.5 574 522.4 Q576 524 578 522.2 L581.2 519"/><path d="M582.8 517 L585.6 514 Q587.2 512 585.4 510 Q583.4 508.4 581.4 510.2 L578.3 513.3"/><path d="M577.5 519 L582 514.5"/></g>
  <!-- print grid -->
  <g fill="#f2f2f2"><rect x="596.2" y="510.5" width="3.6" height="3.2"/><rect x="596.2" y="515" width="3.6" height="3.2"/><rect x="596.2" y="519.5" width="3.6" height="3.2"/></g>
  <rect x="601.5" y="510.6" width="12.7" height="12.2" fill="#d0d0d0"/>
  <g fill="#fbfbfb"><rect x="602.6" y="511.6" width="4.6" height="4.4"/><rect x="608.6" y="511.6" width="4.6" height="4.4"/><rect x="602.6" y="517.4" width="4.6" height="4.4"/><rect x="608.6" y="517.4" width="4.6" height="4.4"/></g>
  <path d="M600 509.5 Q602.5 506.8 605.5 509" fill="none" stroke="#ddd" stroke-width="0.7"/>
  <!-- timeline -->
  <circle cx="630.6" cy="515.7" r="8.6" fill="none" stroke="#e0e0e0" stroke-width="1.1"/>
  <g stroke="#ddd" stroke-width="0.8"><line x1="630.6" y1="507.6" x2="630.6" y2="509"/><line x1="638.7" y1="515.7" x2="637.3" y2="515.7"/><line x1="630.6" y1="523.8" x2="630.6" y2="522.4"/><line x1="622.5" y1="515.7" x2="623.9" y2="515.7"/><line x1="636.2" y1="510.1" x2="635.3" y2="511"/><line x1="625" y1="510.1" x2="625.9" y2="511"/><line x1="636.2" y1="521.3" x2="635.3" y2="520.4"/><line x1="625" y1="521.3" x2="625.9" y2="520.4"/></g>
  <path d="M636 511 L631.8 515.3 L635.5 520.2" fill="none" stroke="#e8e8e8" stroke-width="0.9"/>
  <g fill="#f2f2f2"><circle cx="627.5" cy="514" r="1.6"/><path d="M624.6 518.5 Q624.6 516.2 627.5 516.2 Q630.4 516.2 630.4 518.5Z"/></g>
  <!-- mouse -->
  <rect x="649.7" y="507.5" width="13.2" height="17.2" rx="6.4" fill="none" stroke="#e0e0e0" stroke-width="1"/>
  <line x1="649.7" y1="515" x2="662.9" y2="515" stroke="#e0e0e0" stroke-width="0.9"/>
  <line x1="656.3" y1="507.5" x2="656.3" y2="515" stroke="#e0e0e0" stroke-width="0.9"/>
  <path d="M652 509.6 Q653.5 508.2 655.5 508.4 V514.2 H651.4Z" fill="#e8e8e8"/>
  <!-- dropdown -->
  <path d="M831.5 506 L837 506 L834.25 509.5Z" fill="#f4f4f4"/>
</svg>

<!--/TOOLBAR-->
<div id="content"></div>

<!-- ===== annotation lines ===== -->
<div class="a" style="left:150px;top:60px;width:1px;height:186px;background:#0a7cff"></div>
<div class="a" style="left:312px;top:61px;width:1px;height:119px;background:#0a7cff"></div>
<div class="a" style="left:311px;top:180px;width:1px;height:82px;background:#0a7cff"></div>
<div class="a" style="left:310px;top:262px;width:1px;height:48px;background:#0a7cff"></div>
<div class="a" style="left:210px;top:252px;width:1px;height:150px;background:#0a7cff"></div>
<div class="a" style="left:211px;top:402px;width:1px;height:148px;background:#0a7cff"></div>
<div class="a" style="left:50px;top:520px;width:1px;height:29px;background:#0a7cff"></div>
<div class="a" style="left:585px;top:246px;width:271px;height:1px;background:#0a7cff"></div>
<div class="badge" style="left:136px;top:33px"><span>2</span></div>
<div class="badge" style="left:299px;top:34px"><span>4</span></div>
<div class="badge" style="left:36px;top:548px"><svg style="position:absolute;left:0;top:0" width="28" height="28"><path d="M14.3 9.3 H16.6 V19 H14.3 V12 Q13 13 11.6 13.3 V11.5 Q13.4 10.8 14.3 9.3Z" fill="#fff"/></svg></div>
<div class="badge" style="left:197px;top:549px"><span>3</span></div>
<div class="badge" style="left:855px;top:232px"><span>5</span></div>

</body></html>
